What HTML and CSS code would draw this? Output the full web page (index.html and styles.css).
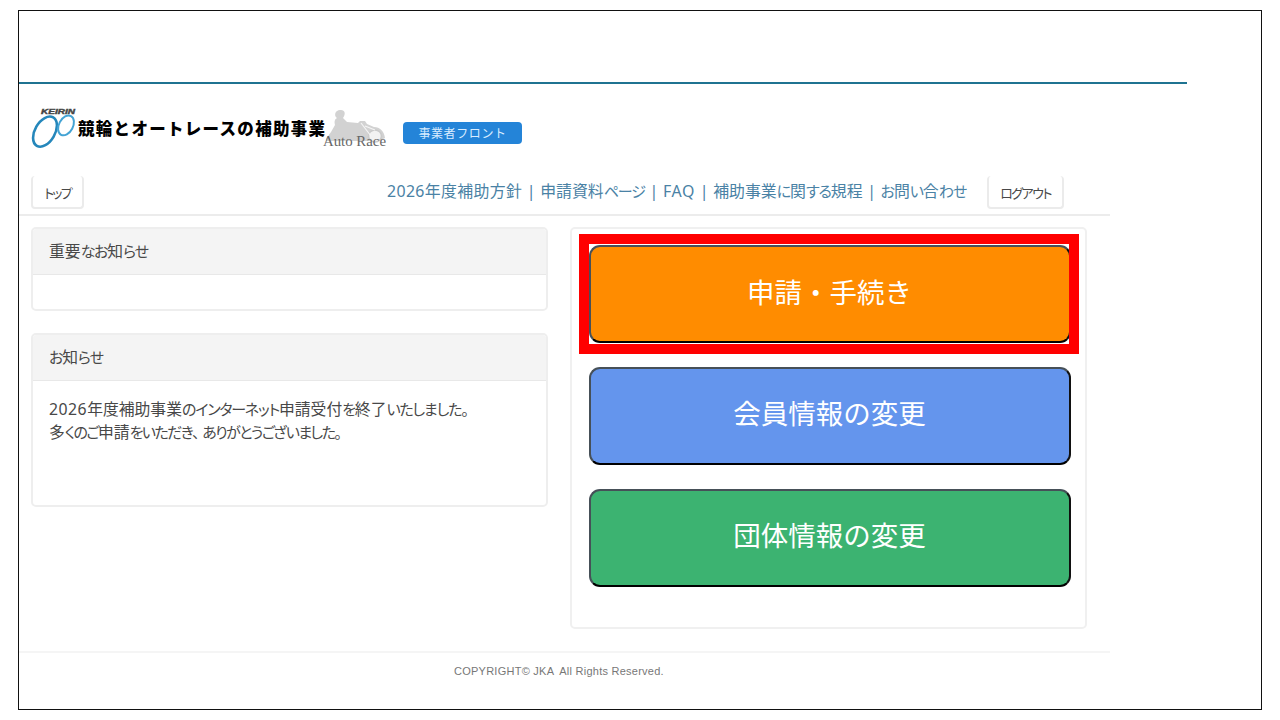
FILE: index.html
```html
<!DOCTYPE html>
<html lang="ja">
<head>
<meta charset="utf-8">
<title>競輪とオートレースの補助事業</title>
<link rel="stylesheet" href="styles.css">
</head>
<body>
<div class="frame">
  <div class="rule"></div>
  <header class="brand">
    <svg class="keirin" width="46" height="46" viewBox="0 0 46 46">
      <text class="keirin-name" x="10" y="11" textLength="34" lengthAdjust="spacingAndGlyphs">KEIRIN</text>
      <ellipse cx="14" cy="28.6" rx="10" ry="16.4" transform="rotate(30 14 28.6)" fill="none" stroke="#2587bb" stroke-width="2.6"/>
      <ellipse cx="35" cy="22.4" rx="7" ry="10.6" transform="rotate(28 35 22.4)" fill="none" stroke="#43a3d4" stroke-width="2"/>
    </svg>
    <span class="site-name">競輪とオートレースの補助事業</span>
    <svg class="autorace" width="66" height="42" viewBox="0 0 66 42">
      <path d="M4 30 L9 23 L13 16 C12 12 13 10 15 9 C11 6 14 0 19 1 C23 1 24 5 21 9 L25 13 L36 14 L38 12 L43 12 L45 15 L52 18 C58 18 62 22 63 29 L57 32 L4 32Z" fill="#d2d2d2"/>
      <ellipse cx="53" cy="27" rx="6.5" ry="6" fill="#f2f2f2" stroke="#cacaca" stroke-width="1.6"/>
      <path d="M39 14 L49 27 M43 17 L53 21" stroke="#f5f5f5" stroke-width="1.2" fill="none"/>
      <text class="autorace-name" x="1" y="37" textLength="63" lengthAdjust="spacingAndGlyphs">Auto Race</text>
    </svg>
    <span class="badge">事業者フロント</span>
  </header>
  <nav class="nav">
    <a class="tab tab-top">トップ</a>
    <div class="links"><a>2026年度補助方針</a><i>|</i><a>申請資料<span class="kana">ページ</span></a><i>|</i><a class="faq">FAQ</a><i>|</i><a>補助事業<span class="kana">に</span>関<span class="kana">する</span>規程</a><i>|</i><a><span class="kana">お</span>問<span class="kana">い</span>合<span class="kana">わせ</span></a></div>
    <a class="tab tab-logout">ログアウト</a>
  </nav>
  <main class="content">
    <div class="notices">
      <section class="panel">
        <h2 class="panel-title">重要<span class="kana">なお</span>知<span class="kana">らせ</span></h2>
        <div class="panel-body short"></div>
      </section>
      <section class="panel">
        <h2 class="panel-title"><span class="kana">お</span>知<span class="kana">らせ</span></h2>
        <div class="panel-body tall">
          <p><span class="digits">2026</span>年度補助事業<span class="kana">のインターネット</span>申請受付<span class="kana">を</span>終了<span class="kana">いたしました。</span></p>
          <p class="thanks">多<span class="kana">くのご</span>申請<span class="kana">をいただき<span class="comma">、</span>ありがとうございました。</span></p>
        </div>
      </section>
    </div>
    <div class="actions">
      <div class="highlighted"><button class="action orange">申請・手続き</button></div>
      <button class="action blue">会員情報の変更</button>
      <button class="action green">団体情報の変更</button>
    </div>
  </main>
  <footer class="footer"><span>COPYRIGHT© JKA</span><span>All Rights Reserved.</span></footer>
</div>
</body>
</html>
```
FILE: styles.css
```css
* { box-sizing: border-box; }
body { margin: 0; width: 1280px; height: 720px; overflow: hidden; background: #fff; color: #484848; font-family: "Noto Sans", "Noto Sans CJK JP", sans-serif; }
h2, p { margin: 0; font-weight: 400; }
.frame { width: 1244px; height: 700px; margin: 10px 0 0 18px; border: 1px solid #111; display: flex; flex-direction: column; align-items: flex-start; }
.rule { width: 1168px; height: 2px; margin-top: 71px; background: #1f7391; }
.brand { height: 92px; padding-left: 12px; display: flex; align-items: flex-start; }
.keirin { margin-top: 19px; }
.keirin-name { font: italic 700 7px "Liberation Sans", sans-serif; fill: #444; stroke: #444; stroke-width: .4px; }
.site-name { width: 249px; margin: 32px 0 0 1px; font: 900 16.5px/24px "Noto Sans CJK JP", sans-serif; color: #000; letter-spacing: 1.3px; white-space: nowrap; }
.autorace { margin: 25px 0 0 -5px; }
.autorace-name { font: 14px "Liberation Serif", serif; fill: #666; }
.badge { width: 119px; height: 22px; margin: 38px 0 0 15px; border-radius: 4px; background: #2484d8; color: #d8ecff; font: 12px/22px "Noto Sans CJK JP", sans-serif; letter-spacing: .6px; text-align: center; }
.nav { width: 1091px; height: 40px; padding-left: 12px; border-bottom: 2px solid #ececec; display: flex; align-items: flex-start; }
.tab { height: 33px; border: 2px solid #ebebeb; border-top: 0; border-radius: 4px; font-size: 13px; line-height: 34px; text-align: center; font-feature-settings: "palt"; white-space: nowrap; }
.tab-top { width: 53px; letter-spacing: -1.8px; }
.tab-logout { width: 77px; margin-left: auto; margin-right: 46px; letter-spacing: -1.5px; }
.links { margin-left: 303px; display: flex; font-size: 15.9px; line-height: 30px; color: #4a82a5; font-feature-settings: "palt"; white-space: nowrap; }
.links a:first-child { letter-spacing: .35px; }
.links i { width: 18px; text-align: center; font-style: normal; }
.faq { letter-spacing: .7px; }
.kana { font-size: 15px; letter-spacing: -1.2px; }
.links .kana { letter-spacing: -1.1px; }
.thanks .kana { letter-spacing: -1.6px; }
.thanks .comma { letter-spacing: 2.5px; }
.digits { letter-spacing: .5px; }
.content { padding: 11px 0 0 12px; display: flex; gap: 22px; }
.notices { width: 517px; display: flex; flex-direction: column; gap: 22px; }
.panel { border: 2px solid #eee; border-radius: 5px; overflow: hidden; }
.panel-title { height: 46px; padding-left: 16px; background: #f4f4f4; border-bottom: 1px solid #e8e8e8; font-size: 15.8px; line-height: 45px; font-feature-settings: "palt"; }
.short { height: 34px; }
.tall { height: 124px; padding: 17px 0 0 16px; font-size: 15.8px; line-height: 23px; white-space: nowrap; font-feature-settings: "palt"; }
.actions { width: 517px; height: 402px; padding: 16px 0 0 17px; border: 2px solid #f0f0f0; border-radius: 5px; display: flex; flex-direction: column; align-items: flex-start; gap: 24px; }
.highlighted { position: relative; width: 481px; height: 98px; }
.highlighted::after { content: ""; position: absolute; inset: -11px -9px -11px -10px; border: 10px solid #f00; }
.action { display: block; width: 482px; height: 98px; padding: 0 1px 8px 0; border: 2px solid; border-color: #465058 #111 #000 #465058; border-radius: 11px; font: 27.5px "Noto Sans CJK JP", sans-serif; color: #fff; text-align: center; }
.orange { background: #ff8c00; padding-bottom: 7px; }
.blue { background: #6495ed; }
.green { background: #3cb371; }
.footer { width: 1091px; margin-top: 22px; padding: 10px 0 0 435px; border-top: 2px solid #f5f5f5; display: flex; gap: 5px; font: 11px/17px "Liberation Sans", sans-serif; letter-spacing: .25px; color: #777; white-space: nowrap; }
```
